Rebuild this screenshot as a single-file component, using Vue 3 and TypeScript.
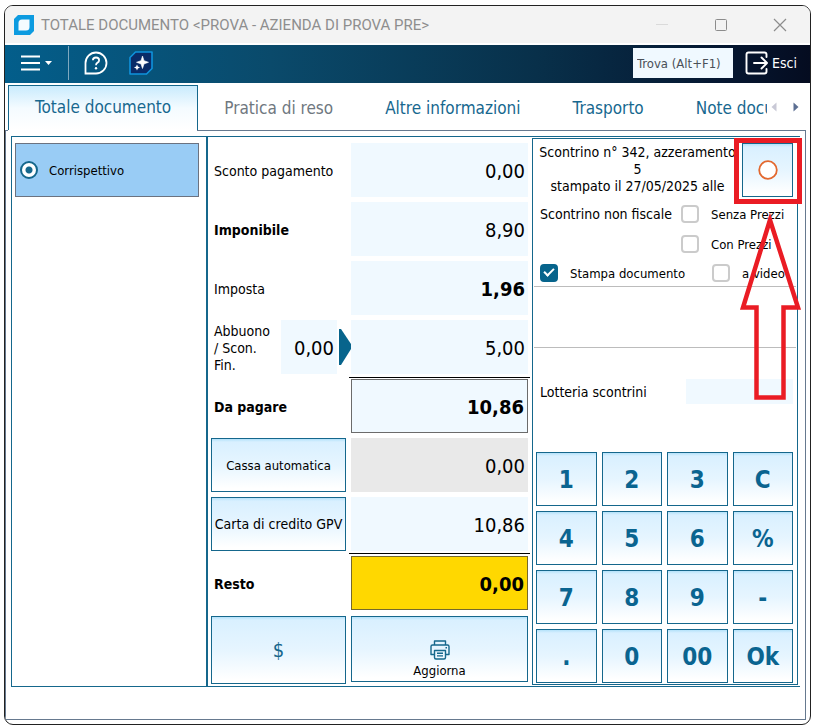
<script setup lang="ts">
import { ref } from 'vue'

interface AmountRow {
  id: string
  label: string
  value: string
  kind: 'label' | 'strong' | 'discount' | 'button'
  tone?: 'bold' | 'due' | 'disabled' | 'change'
  small?: boolean
}

const tabs = ['Totale documento', 'Pratica di reso', 'Altre informazioni', 'Trasporto', 'Note docu']
const activeTab = ref(tabs[0])

const rows = ref<AmountRow[]>([
  { id: 'sconto', label: 'Sconto pagamento', value: '0,00', kind: 'label' },
  { id: 'imponibile', label: 'Imponibile', value: '8,90', kind: 'strong' },
  { id: 'imposta', label: 'Imposta', value: '1,96', kind: 'label', tone: 'bold' },
  { id: 'abbuono', label: 'Abbuono / Scon. Fin.', value: '5,00', kind: 'discount' },
  { id: 'dapagare', label: 'Da pagare', value: '10,86', kind: 'strong', tone: 'due' },
  { id: 'cassa', label: 'Cassa automatica', value: '0,00', kind: 'button', tone: 'disabled', small: true },
  { id: 'carta', label: 'Carta di credito GPV', value: '10,86', kind: 'button' },
  { id: 'resto', label: 'Resto', value: '0,00', kind: 'strong', tone: 'change' },
])

const discount = ref('0,00')
const payment = ref('corrispettivo')
const withoutPrices = ref(false)
const withPrices = ref(false)
const printDocument = ref(true)
const onScreen = ref(false)
const lottery = ref('')
const search = ref('')
const keys = ['1', '2', '3', 'C', '4', '5', '6', '%', '7', '8', '9', '-', '.', '0', '00', 'Ok']
</script>

<template>
  <div class="desktop">
    <main class="window">
      <header class="titlebar">
        <svg class="app-icon" viewBox="0 0 20 20" aria-hidden="true">
          <path d="M4 0H20V16L16 20H0V4Z" fill="#0d9be0" />
          <path d="M8 4.500H15.500V12Q15.500 15.500 12 15.500H4.500V8Q4.500 4.500 8 4.500Z" fill="#f4fbff" />
        </svg>
        <h1 class="title">TOTALE DOCUMENTO &lt;PROVA - AZIENDA DI PROVA PRE&gt;</h1>
        <button class="win-btn" type="button" aria-label="Riduci">
          <svg viewBox="0 0 14 14"><path d="M1 6.500H13" stroke="#dadada" /></svg>
        </button>
        <button class="win-btn" type="button" aria-label="Ingrandisci">
          <svg viewBox="0 0 14 14"><rect x="1.500" y="1.500" width="11" height="11" rx="1" fill="none" stroke="#8c8c8c" /></svg>
        </button>
        <button class="win-btn" type="button" aria-label="Chiudi">
          <svg viewBox="0 0 14 14"><path d="M1 1L13 13M13 1L1 13" stroke="#8c8c8c" stroke-width="1.200" /></svg>
        </button>
      </header>

      <div class="toolbar">
        <button class="tool menu" type="button" aria-label="Menu">
          <svg width="32" height="18" viewBox="0 0 32 18">
            <path d="M0 2.500H19M0 9H19M0 15.500H19" stroke="#fff" stroke-width="1.800" />
            <path d="M24 7H31L27.500 11Z" fill="#fff" />
          </svg>
        </button>
        <span class="divider"></span>
        <button class="tool help" type="button" aria-label="Aiuto">
          <svg width="24" height="24" viewBox="0 0 24 24" fill="none" stroke="#fff">
            <path d="M1.500 22.500V12A10.500 10.500 0 1 1 12 22.500Z" stroke-width="1.800" />
            <path d="M8.900 9.300Q8.900 6.500 12 6.500Q15.100 6.500 15.100 9.200Q15.100 10.800 13.500 11.600Q12 12.400 12 14.200" stroke-width="1.800" />
            <circle cx="12" cy="17.300" r="1.200" fill="#fff" stroke="none" />
          </svg>
        </button>
        <button class="tool" type="button" aria-label="Assistente">
          <svg width="24" height="24" viewBox="0 0 24 24">
            <path d="M6.500 1H23V17.500L17.500 23H1V6.500Z" fill="#0a2c68" stroke="#0f93dc" stroke-width="1.600" stroke-linejoin="round" />
            <path d="M13.500 5L15 9.700L19.500 11.300L15 12.900L13.500 17.500L12 12.900L7.500 11.300L12 9.700Z" fill="#fff" stroke="#fff" stroke-width=".6" />
            <path d="M8 13.500L8.900 15.600L11 16.500L8.900 17.400L8 19.500L7.100 17.400L5 16.500L7.100 15.600Z" fill="#fff" />
          </svg>
        </button>
        <input v-model="search" class="search" type="text" placeholder="Trova (Alt+F1)" aria-label="Trova" />
        <button class="exit" type="button">
          <svg width="24" height="24" viewBox="0 0 24 24" fill="none" stroke="#fff" stroke-width="1.900" stroke-linecap="round" stroke-linejoin="round">
            <path d="M21.500 6V3.500Q21.500 1.500 19.500 1.500H3.500Q1.500 1.500 1.500 3.500V20.500Q1.500 22.500 3.500 22.500H19.500Q21.500 22.500 21.500 20.500V18" />
            <path d="M9 12H21.500M16.500 6.500L22 12L16.500 17.500" />
          </svg>
          Esci
        </button>
      </div>

      <nav class="tabs">
        <div class="tab-list">
          <button
            v-for="tab in tabs"
            :key="tab"
            type="button"
            class="tab"
            :class="{ active: tab === activeTab, muted: tab === 'Pratica di reso' }"
            @click="activeTab = tab"
          >
            {{ tab }}
          </button>
        </div>
        <div class="tab-scroll">
          <button type="button" aria-label="Schede precedenti">
            <svg width="6" height="10" viewBox="0 0 6 10"><path d="M5.500 0.500V9.500L0.500 5Z" fill="#c9c9d6" /></svg>
          </button>
          <button type="button" aria-label="Schede successive">
            <svg width="6" height="10" viewBox="0 0 6 10"><path d="M0.500 0.500V9.500L5.500 5Z" fill="#5c6f92" /></svg>
          </button>
        </div>
      </nav>

      <section class="page">
        <div class="frame">
          <div class="payments">
            <label class="payment">
              <input v-model="payment" class="radio" type="radio" name="payment" value="corrispettivo" />
              Corrispettivo
            </label>
          </div>

          <div class="amounts">
            <div v-for="row in rows" :key="row.id" class="row" :class="row.tone">
              <button v-if="row.kind === 'button'" class="btn" :class="{ small: row.small }" type="button">
                {{ row.label }}
              </button>
              <div v-else-if="row.kind === 'discount'" class="discount">
                <label class="caption" :for="row.id">{{ row.label }}</label>
                <input v-model="discount" class="value" type="text" aria-label="Percentuale abbuono" />
                <svg class="pointer" width="12" height="36" viewBox="0 0 12 36" aria-hidden="true">
                  <path d="M0 0H2L12 15V20L2 36H0Z" fill="#07648c" />
                </svg>
              </div>
              <label v-else class="caption" :class="{ strong: row.kind === 'strong' }" :for="row.id">{{ row.label }}</label>
              <input :id="row.id" v-model="row.value" class="value" type="text" :aria-label="row.label" />
            </div>
            <div class="row actions">
              <button class="btn" type="button"><span class="dollar">$</span></button>
              <button class="btn print" type="button">
                <svg width="20" height="20" viewBox="0 0 20 20" fill="none" stroke="#15678c" stroke-width="1.400" stroke-linejoin="round">
                  <path d="M4.500 5V1H15.500V5" />
                  <path d="M4.500 14.500H1V6.500Q1 5 2.500 5H17.500Q19 5 19 6.500V14.500H15.500" />
                  <path d="M4.500 10.500H15.500V17.500Q15.500 19 14 19H6Q4.500 19 4.500 17.500Z" />
                  <path d="M7 13.300H13M7 15.900H13M15.500 7.800H17" />
                </svg>
                Aggiorna
              </button>
            </div>
          </div>

          <div class="receipt">
            <div class="receipt-head">
              <p class="receipt-text">Scontrino n° 342, azzeramento<br />5<br />stampato il 27/05/2025 alle</p>
              <button class="btn record" type="button" aria-label="Registra">
                <svg width="20" height="20" viewBox="0 0 20 20"><circle cx="10" cy="10" r="8.800" fill="#fff" stroke="#e3682f" stroke-width="1.800" /></svg>
              </button>
            </div>

            <div class="options">
              <span class="opt-title">Scontrino non fiscale</span>
              <label class="check"><input v-model="withoutPrices" type="checkbox" />Senza Prezzi</label>
              <label class="check second"><input v-model="withPrices" type="checkbox" />Con Prezzi</label>
            </div>
            <div class="print-options">
              <label class="check"><input v-model="printDocument" type="checkbox" />Stampa documento</label>
              <label class="check"><input v-model="onScreen" type="checkbox" />a video</label>
            </div>
            <div class="spacer"></div>
            <div class="lottery">
              <label for="lottery">Lotteria scontrini</label>
              <input id="lottery" v-model="lottery" type="text" />
            </div>
            <div class="keypad">
              <button v-for="key in keys" :key="key" class="btn key" type="button">{{ key }}</button>
            </div>

            <svg class="callout" width="70" height="264" viewBox="0 0 70 264" fill="none" stroke="#ea1c24" aria-hidden="true">
              <rect x="4.500" y="2.500" width="63" height="61" stroke-width="5" />
              <path d="M38 82L11 169.500H24.500V259.500H51.500V169.500H66Z" stroke-width="4.500" />
            </svg>
          </div>
        </div>
      </section>
    </main>
  </div>
</template>

<style>
body {
  margin: 0;
  background: #fff;
}
</style>

<style scoped>
.desktop {
  box-sizing: border-box;
  min-height: 100vh;
  padding: 5px 2px 2px 4px;
  display: flex;
  font-family: "DejaVu Sans Condensed", "DejaVu Sans", sans-serif;
  font-size: 14px;
  color: #000;
}
.desktop *,
.desktop *::before {
  box-sizing: border-box;
}
button,
input {
  font: inherit;
  color: inherit;
  margin: 0;
  padding: 0;
  border: 0;
  border-radius: 0;
  background: none;
}
svg {
  display: block;
  flex: none;
}
.window {
  flex: 1;
  min-width: 0;
  display: flex;
  flex-direction: column;
  border: 1px solid #222;
  border-radius: 9px;
  overflow: hidden;
  background: #fff;
}
.titlebar {
  display: flex;
  align-items: center;
  height: 37px;
  padding: 0 1px 0 9px;
  background: #f3f3f3;
}
.app-icon {
  width: 20px;
  height: 20px;
}
.title {
  flex: 1;
  margin: 0 0 0 7px;
  font: 400 15px Roboto, "Noto Sans", sans-serif;
  color: #8e8e8e;
  white-space: nowrap;
}
.win-btn {
  width: 59px;
  height: 37px;
  display: flex;
  align-items: center;
  justify-content: center;
}
.win-btn svg {
  width: 14px;
  height: 14px;
}
.toolbar {
  display: flex;
  align-items: center;
  height: 38px;
  margin-top: 2px;
  padding: 0 13px 2px 16px;
  background: linear-gradient(90deg, #035e8b 0%, #0a4a6b 33%, #08304a 66%, #051630 90%, #050c20 100%);
  color: #fff;
}
.tool {
  display: flex;
}
.divider {
  width: 1px;
  height: 34px;
  margin: 0 15px;
  background: #7fa9bf;
}
.help {
  margin-right: 21px;
}
.search {
  width: 100px;
  height: 30px;
  margin-left: auto;
  padding: 0 4px;
  background: #f0f9ff;
  color: #444;
  font-size: 13px;
}
.search::placeholder {
  color: #4a5058;
  opacity: 1;
}
.exit {
  display: flex;
  align-items: center;
  gap: 3px;
  margin-left: 12px;
}
.tabs {
  position: relative;
  display: flex;
  height: 46px;
  margin-top: 1px;
  padding: 0 10px 0 3px;
}
.tab-list {
  display: flex;
  flex: 1;
  min-width: 0;
  overflow: hidden;
  padding-top: 1px;
}
.tab {
  flex: none;
  padding: 0 26px;
  font-size: 17px;
  color: #17688f;
  white-space: nowrap;
}
.tab.muted {
  color: #6f7880;
}
.tab.active {
  padding: 0 26px 2px;
  border: 1px solid #15678c;
  border-bottom: 0;
  background: linear-gradient(#c9ebfd, #f4fbff 50%, #fff);
}
.tab-scroll {
  display: flex;
  align-items: center;
  gap: 16px;
  padding: 0 1px 0 4px;
}
.page {
  position: relative;
  flex: 1;
  display: flex;
  margin: 0 4px 4px 0;
  padding: 5px 5px 32px;
  border: 1px solid #66798f;
}
.page::before {
  content: "";
  position: absolute;
  top: -1px;
  left: 2px;
  width: 189px;
  height: 1px;
  background: #fff;
}
.frame {
  flex: 1;
  display: grid;
  grid-template-columns: 197fr 324fr 266fr;
  padding-right: 2px;
  border-top: 1px solid #15678c;
  border-bottom: 1px solid #15678c;
}
.payments {
  padding: 6px 7px 6px 3px;
  border-left: 1px solid #15678c;
  border-right: 2px solid #15678c;
}
.payment {
  display: flex;
  align-items: center;
  gap: 11px;
  height: 54px;
  padding-left: 4px;
  border: 1px solid #6b7280;
  background: #99ccf5;
  font-size: 13px;
}
.radio {
  appearance: none;
  width: 18px;
  height: 18px;
  border: 2px solid #15678c;
  border-radius: 50%;
  background: radial-gradient(circle, #15678c 3px, #fff 4px);
}
.amounts {
  padding: 6px 4px 0 3px;
}
.row {
  display: grid;
  grid-template-columns: 135fr 177fr;
  column-gap: 5px;
  height: 59px;
  padding-bottom: 5px;
}
.caption {
  align-self: center;
  padding: 2px 8px 0 3px;
  line-height: 17px;
}
.strong {
  font-weight: 700;
}
.value {
  width: 100%;
  min-width: 0;
  height: 54px;
  padding: 2px 3px 0;
  background: #f0f9ff;
  font-size: 20px;
  text-align: right;
}
.bold .value,
.due .value,
.change .value {
  font-weight: 700;
}
.due,
.change {
  position: relative;
}
.due::before,
.change::before {
  content: "";
  position: absolute;
  top: -2px;
  right: -2px;
  width: 181px;
  height: 1px;
  background: #000;
}
.change::before {
  top: -3px;
}
.due .value,
.change .value {
  border: 1px solid #6b6b6b;
}
.disabled .value {
  background: #e9e9e9;
}
.change .value {
  background: #ffd800;
  border-color: #75692c;
}
.discount {
  display: grid;
  grid-template-columns: 68px 1fr 7px;
  column-gap: 2px;
  align-items: center;
}
.btn {
  display: flex;
  align-items: center;
  justify-content: center;
  border: 1px solid #15678c;
  background: linear-gradient(#b4e2fa 0, #d9f0ff 3px, #e6f5ff 50%, #fff 95%);
  white-space: nowrap;
}
.small {
  font-size: 13px;
}
.actions {
  height: 68px;
  margin-top: 1px;
  padding: 0;
}
.dollar {
  color: #15678c;
  font-size: 20px;
}
.print {
  height: 66px;
  padding-top: 20px;
  flex-direction: column;
  gap: 3px;
  font-size: 13px;
}
.receipt {
  position: relative;
  margin: 1px 0;
  border: 1px solid #15678c;
}
.receipt-head {
  display: flex;
  height: 58px;
  padding: 4px 4px 0 0;
}
.receipt-text {
  flex: 1;
  min-width: 0;
  margin: 0;
  padding-top: 1px;
  text-align: center;
  line-height: 17px;
  white-space: nowrap;
}
.record {
  width: 51px;
  height: 54px;
}
.options {
  display: grid;
  grid-template-columns: 141px 1fr;
  grid-auto-rows: 30px;
  align-items: center;
  padding: 2px 0 1px 7px;
}
.second {
  grid-column: 2;
}
.check {
  display: flex;
  align-items: center;
  gap: 12px;
  font-size: 13px;
  white-space: nowrap;
}
.check input {
  appearance: none;
  flex: none;
  width: 18px;
  height: 18px;
  border: 2px solid #cbcbcb;
  border-radius: 4px;
  background: #fff;
}
.check input:checked {
  border-color: #07648c;
  background: #07648c;
  position: relative;
}
.check input:checked::before {
  content: "";
  position: absolute;
  left: 2px;
  top: 2px;
  width: 10px;
  height: 6px;
  border-left: 2px solid #fff;
  border-bottom: 2px solid #fff;
  transform: rotate(-45deg);
}
.print-options {
  display: grid;
  grid-template-columns: 172px 1fr;
  height: 27px;
  align-items: center;
  margin: 0 1px;
  padding: 0 0 0 6px;
  border-bottom: 1px solid #bcbcbc;
}
.spacer {
  height: 61px;
  margin: 0 1px;
  border-bottom: 1px solid #bcbcbc;
}
.lottery {
  display: flex;
  align-items: center;
  justify-content: space-between;
  height: 25px;
  margin: 31px 4px 48px 7px;
}
.lottery input {
  width: 107px;
  height: 25px;
  background: #f0f9ff;
}
.keypad {
  display: grid;
  grid-template-columns: repeat(4, 1fr);
  grid-auto-rows: 54px;
  gap: 5px;
  padding: 0 4px 1px 3px;
}
.key {
  padding-top: 2px;
  color: #0a6490;
  font-size: 24px;
  font-weight: 700;
}
.callout {
  position: absolute;
  top: -1px;
  right: -5px;
  pointer-events: none;
}
</style>
